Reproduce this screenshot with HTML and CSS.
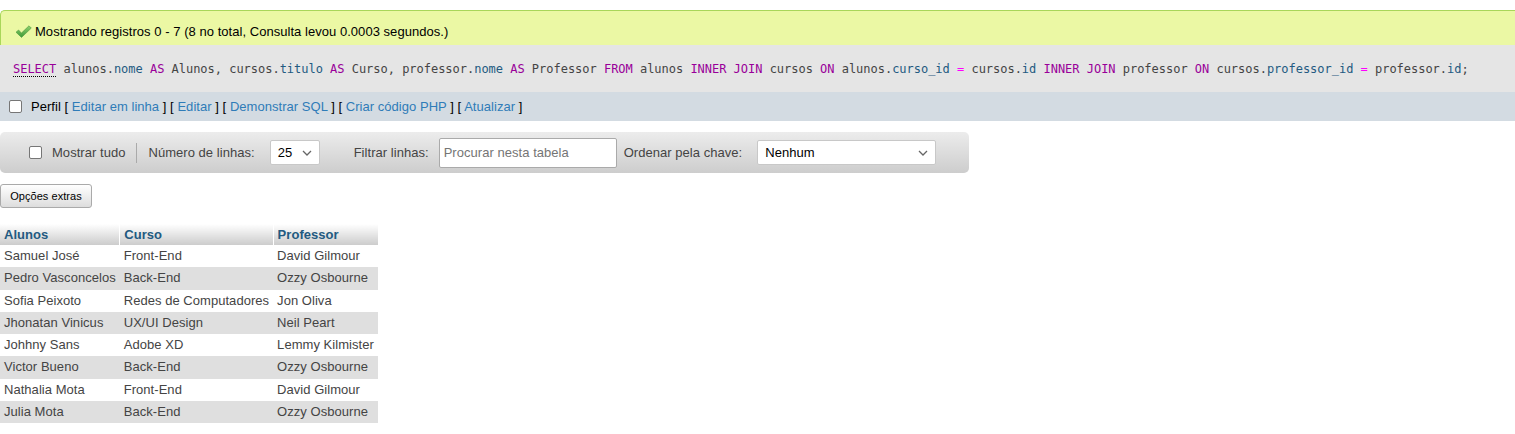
FILE: index.html
```html
<!DOCTYPE html>
<html lang="pt">
<head>
<meta charset="utf-8">
<title>Resultado</title>
<link rel="stylesheet" href="styles.css">
</head>
<body>
<div class="success">
  <svg class="check" width="17" height="13" viewBox="0 0 17 13">
    <defs><linearGradient id="g" x1="0" y1="0" x2="0" y2="1"><stop offset="0" stop-color="#8fd16f"/><stop offset="1" stop-color="#3f9a36"/></linearGradient></defs>
    <path d="M1 7.2 L3.6 5 L6.4 8.1 L14 0.8 L16.3 3.1 L6.5 12.4 Z" fill="url(#g)" stroke="#4f9a3e" stroke-width="0.6" stroke-linejoin="round"/>
  </svg>
  <span>Mostrando registros 0 - 7 (8 no total, Consulta levou 0.0003 segundos.)</span>
</div>
<div class="sqlbox"><code><span class="kw kw-doc">SELECT</span> alunos.<span class="col">nome</span> <span class="kw">AS</span> Alunos, cursos.<span class="col">titulo</span> <span class="kw">AS</span> Curso, professor.<span class="col">nome</span> <span class="kw">AS</span> Professor <span class="kw">FROM</span> alunos <span class="kw">INNER JOIN</span> cursos <span class="kw">ON</span> alunos.<span class="col">curso_id</span> <span class="op">=</span> cursos.<span class="col">id</span> <span class="kw">INNER JOIN</span> professor <span class="kw">ON</span> cursos.<span class="col">professor_id</span> <span class="op">=</span> professor.<span class="col">id</span>;</code></div>
<div class="tools">
  <span class="cb"></span>
  <span class="tools-text">Perfil [ <a href="#">Editar em linha</a> ] [ <a href="#">Editar</a> ] [ <a href="#">Demonstrar SQL</a> ] [ <a href="#">Criar código PHP</a> ] [ <a href="#">Atualizar</a> ]</span>
</div>
<div class="navbar">
  <div class="nav-group">
    <span class="cb"></span>
    <span class="lbl">Mostrar tudo</span>
  </div>
  <div class="sep"></div>
  <div class="nav-group">
    <span class="lbl">Número de linhas:</span>
    <div class="select sel-small"><span>25</span>
      <svg width="10" height="6" viewBox="0 0 10 6"><path d="M1 1 L5 5 L9 1" fill="none" stroke="#666" stroke-width="1.3"/></svg>
    </div>
  </div>
  <div class="nav-group filter">
    <span class="lbl">Filtrar linhas:</span>
    <div class="input">Procurar nesta tabela</div>
    <span class="lbl">Ordenar pela chave:</span>
    <div class="select sel-wide"><span>Nenhum</span>
      <svg width="10" height="6" viewBox="0 0 10 6"><path d="M1 1 L5 5 L9 1" fill="none" stroke="#666" stroke-width="1.3"/></svg>
    </div>
  </div>
</div>
<div class="btn">Opções extras</div>
<table class="data">
  <thead>
    <tr><th>Alunos</th><th>Curso</th><th>Professor</th></tr>
  </thead>
  <tbody>
    <tr><td>Samuel José</td><td>Front-End</td><td>David Gilmour</td></tr>
    <tr><td>Pedro Vasconcelos</td><td>Back-End</td><td>Ozzy Osbourne</td></tr>
    <tr><td>Sofia Peixoto</td><td>Redes de Computadores</td><td>Jon Oliva</td></tr>
    <tr><td>Jhonatan Vinicus</td><td>UX/UI Design</td><td>Neil Peart</td></tr>
    <tr><td>Johhny Sans</td><td>Adobe XD</td><td>Lemmy Kilmister</td></tr>
    <tr><td>Victor Bueno</td><td>Back-End</td><td>Ozzy Osbourne</td></tr>
    <tr><td>Nathalia Mota</td><td>Front-End</td><td>David Gilmour</td></tr>
    <tr><td>Julia Mota</td><td>Back-End</td><td>Ozzy Osbourne</td></tr>
  </tbody>
</table>
</body>
</html>
```
FILE: styles.css
```css
* { box-sizing: border-box; }
html, body { margin: 0; padding: 0; background: #fff; }
body {
  font-family: "Liberation Sans", Arial, sans-serif;
  font-size: 13px;
  letter-spacing: 0.04px;
  color: #444;
  padding-top: 10px;
}
a { color: #2f7cb8; text-decoration: none; }

.success {
  height: 35px;
  display: flex;
  align-items: center;
  padding: 6px 0 0 14px;
  background: #ebf8a4;
  border: 1px solid #a9d65a;
  border-bottom: none;
  border-right: none;
  border-top-left-radius: 5px;
  color: #000;
  font-size: 13px;
}
.check { margin-right: 3px; margin-top: 1px; }

.sqlbox {
  height: 47px;
  background: #e5e5e5;
  display: flex;
  align-items: center;
  padding-left: 13px;
  white-space: nowrap;
}
.sqlbox code {
  font-family: "DejaVu Sans Mono", "Liberation Mono", monospace;
  font-size: 12px;
  color: #444;
  letter-spacing: -0.02px;
}
.kw { color: #909; }
.kw-doc { border-bottom: 1px dotted #000; }
.col { color: #235a81; }
.op { color: #f0f; }

.tools {
  height: 29px;
  background: #d3dbe2;
  display: flex;
  align-items: center;
  padding-left: 9px;
  color: #000;
}
.cb {
  display: inline-block;
  width: 13px;
  height: 13px;
  border: 1px solid #767676;
  border-radius: 2px;
  background: #fff;
  flex: none;
}
.tools-text { margin-left: 9px; }

.navbar {
  margin-top: 11px;
  width: 969px;
  height: 41px;
  border-radius: 5px;
  background: linear-gradient(#ececec, #cdcdcd);
  display: flex;
  align-items: center;
  padding-left: 29px;
}
.nav-group { display: flex; align-items: center; }
.navbar .cb { margin-right: 10px; }
.lbl { color: #444; }
.sep {
  width: 1px;
  height: 20px;
  background: #aaa;
  margin: 0 11px;
}
.select {
  display: flex;
  align-items: center;
  justify-content: space-between;
  background: #fff;
  border: 1px solid #c8c8c8;
  border-radius: 2px;
  height: 25px;
  padding: 0 7px 0 7px;
  color: #000;
}
.sel-small { width: 50px; margin-left: 15px; }
.sel-wide { width: 179px; margin-left: 15px; }
.filter { margin-left: 34px; }
.input {
  width: 178px;
  height: 30px;
  margin-left: 10px;
  margin-right: 7px;
  background: #fff;
  border: 1px solid #aaa;
  border-radius: 2px;
  display: flex;
  align-items: center;
  padding-left: 4px;
  color: #757575;
}

.btn {
  display: inline-block;
  margin-top: 11px;
  height: 24px;
  width: 92px;
  line-height: 22px;
  text-align: center;
  border: 1px solid #aaa;
  border-radius: 3px;
  background: linear-gradient(#fff, #ddd);
  color: #000;
  font-size: 11px;
}

.data {
  display: table;
  margin-top: 16px;
  border-collapse: collapse;
}
.data th {
  text-align: left;
  color: #235a81;
  font-weight: bold;
  background: linear-gradient(#fff, #ccc);
  padding: 2px 4px 2px 4px;
  height: 21px;
  border-right: 1px solid #fff;
}
.data th:last-child { border-right: none; }
.data td {
  padding: 0 4px;
  height: 22.25px;
  line-height: 22px;
  color: #444;
  white-space: nowrap;
}
.data tbody tr:nth-child(even) td { background: #dfdfdf; }
```
